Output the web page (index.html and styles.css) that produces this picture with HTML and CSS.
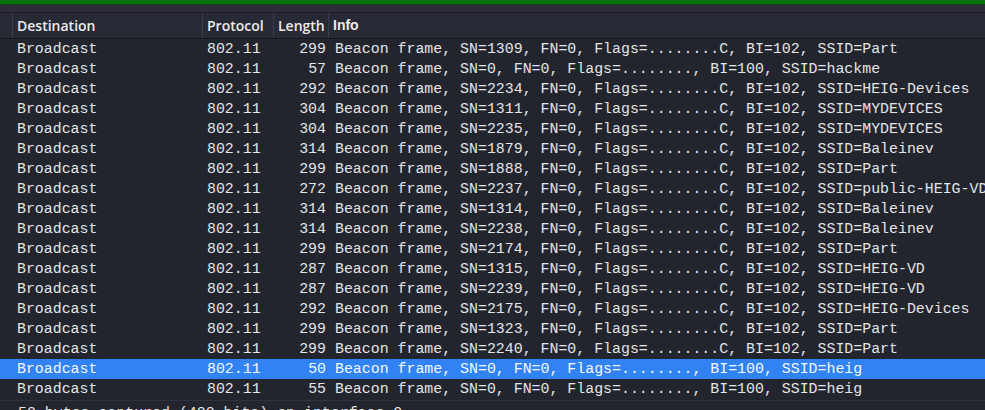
FILE: index.html
```html
<!DOCTYPE html>
<html>
<head>
<meta charset="utf-8">
<link rel="stylesheet" href="styles.css">
</head>
<body>
<div class="app">
  <div class="filterbar"></div>
  <div class="strip"></div>
  <div class="list">
    <div class="head">
      <div class="hc hc-src"></div>
      <div class="hc">Destination</div>
      <div class="hc">Protocol</div>
      <div class="hc">Length</div>
      <div class="hc hc-info">Info</div>
    </div>
    <div class="rows">
      <div class="row"><span></span><span>Broadcast</span><span>802.11</span><span class="len">299</span><span class="info">Beacon frame, SN=1309, FN=0, Flags=........C, BI=102, SSID=Part</span></div>
      <div class="row"><span></span><span>Broadcast</span><span>802.11</span><span class="len">57</span><span class="info">Beacon frame, SN=0, FN=0, Flags=........, BI=100, SSID=hackme</span></div>
      <div class="row"><span></span><span>Broadcast</span><span>802.11</span><span class="len">292</span><span class="info">Beacon frame, SN=2234, FN=0, Flags=........C, BI=102, SSID=HEIG-Devices</span></div>
      <div class="row"><span></span><span>Broadcast</span><span>802.11</span><span class="len">304</span><span class="info">Beacon frame, SN=1311, FN=0, Flags=........C, BI=102, SSID=MYDEVICES</span></div>
      <div class="row"><span></span><span>Broadcast</span><span>802.11</span><span class="len">304</span><span class="info">Beacon frame, SN=2235, FN=0, Flags=........C, BI=102, SSID=MYDEVICES</span></div>
      <div class="row"><span></span><span>Broadcast</span><span>802.11</span><span class="len">314</span><span class="info">Beacon frame, SN=1879, FN=0, Flags=........C, BI=102, SSID=Baleinev</span></div>
      <div class="row"><span></span><span>Broadcast</span><span>802.11</span><span class="len">299</span><span class="info">Beacon frame, SN=1888, FN=0, Flags=........C, BI=102, SSID=Part</span></div>
      <div class="row"><span></span><span>Broadcast</span><span>802.11</span><span class="len">272</span><span class="info">Beacon frame, SN=2237, FN=0, Flags=........C, BI=102, SSID=public-HEIG-VD</span></div>
      <div class="row"><span></span><span>Broadcast</span><span>802.11</span><span class="len">314</span><span class="info">Beacon frame, SN=1314, FN=0, Flags=........C, BI=102, SSID=Baleinev</span></div>
      <div class="row"><span></span><span>Broadcast</span><span>802.11</span><span class="len">314</span><span class="info">Beacon frame, SN=2238, FN=0, Flags=........C, BI=102, SSID=Baleinev</span></div>
      <div class="row"><span></span><span>Broadcast</span><span>802.11</span><span class="len">299</span><span class="info">Beacon frame, SN=2174, FN=0, Flags=........C, BI=102, SSID=Part</span></div>
      <div class="row"><span></span><span>Broadcast</span><span>802.11</span><span class="len">287</span><span class="info">Beacon frame, SN=1315, FN=0, Flags=........C, BI=102, SSID=HEIG-VD</span></div>
      <div class="row"><span></span><span>Broadcast</span><span>802.11</span><span class="len">287</span><span class="info">Beacon frame, SN=2239, FN=0, Flags=........C, BI=102, SSID=HEIG-VD</span></div>
      <div class="row"><span></span><span>Broadcast</span><span>802.11</span><span class="len">292</span><span class="info">Beacon frame, SN=2175, FN=0, Flags=........C, BI=102, SSID=HEIG-Devices</span></div>
      <div class="row"><span></span><span>Broadcast</span><span>802.11</span><span class="len">299</span><span class="info">Beacon frame, SN=1323, FN=0, Flags=........C, BI=102, SSID=Part</span></div>
      <div class="row"><span></span><span>Broadcast</span><span>802.11</span><span class="len">299</span><span class="info">Beacon frame, SN=2240, FN=0, Flags=........C, BI=102, SSID=Part</span></div>
      <div class="row selected"><span></span><span>Broadcast</span><span>802.11</span><span class="len">50</span><span class="info">Beacon frame, SN=0, FN=0, Flags=........, BI=100, SSID=heig</span></div>
      <div class="row"><span></span><span>Broadcast</span><span>802.11</span><span class="len">55</span><span class="info">Beacon frame, SN=0, FN=0, Flags=........, BI=100, SSID=heig</span></div>
    </div>
  </div>
  <div class="details">
    <div class="drow">50 bytes captured (400 bits) on interface 0</div>
  </div>
</div>
</body>
</html>
```

FILE: styles.css
```css
* { box-sizing: border-box; }
html, body {
  margin: 0;
  padding: 0;
  background: #22252e;
  overflow: hidden;
}
.app {
  width: 985px;
  height: 410px;
  display: flex;
  flex-direction: column;
  overflow: hidden;
  background: #22252e;
}
.filterbar {
  height: 5px;
  background: #0c700c;
  border-bottom: 1px solid #0a4a0a;
  flex: none;
}
.strip {
  height: 7px;
  background: #2d2a3a;
  flex: none;
}
.list {
  flex: none;
}
.head {
  display: grid;
  grid-template-columns: 13px 190px 71px 55px 1fr;
  height: 27px;
  background: #272a35;
  border-top: 1px solid #1c1d24;
  border-bottom: 1px solid #14151a;
}
.hc {
  font-family: "Open Sans", "Noto Sans", sans-serif;
  font-weight: 600;
  font-size: 14px;
  color: #ececec;
  line-height: 25px;
  padding-left: 4px;
  border-right: 1px solid #3a3d49;
  white-space: nowrap;
  overflow: hidden;
}
.hc-src { padding: 0; }
.hc-info {
  font-family: "Liberation Sans", Arial, sans-serif;
  font-weight: 700;
  font-size: 14px;
  border-right: none;
}
.rows {
  display: flex;
  flex-direction: column;
}
.row {
  display: grid;
  grid-template-columns: 13px 190px 71px 55px 1fr;
  height: 20px;
  line-height: 20px;
  font-family: "Liberation Mono", "Courier New", monospace;
  font-size: 14.9px;
  color: #e4e4e4;
  white-space: nowrap;
}
.row span {
  overflow: hidden;
  padding-left: 4px;
}
.row span:first-child { padding: 0; }
.row .len {
  text-align: right;
  padding-left: 0;
  padding-right: 3px;
}
.row .info {
  padding-left: 6px;
}
.row.selected {
  background: #3183f3;
  color: #f4f8ff;
}
.details {
  flex: 1;
  border-top: 1px solid #30333d;
  margin-top: 1px;
  background: #22252e;
}
.drow {
  font-family: "Liberation Mono", "Courier New", monospace;
  font-size: 14.9px;
  color: #e4e4e4;
  line-height: 20px;
  padding-left: 18px;
  margin-top: 2px;
  white-space: nowrap;
}
```
